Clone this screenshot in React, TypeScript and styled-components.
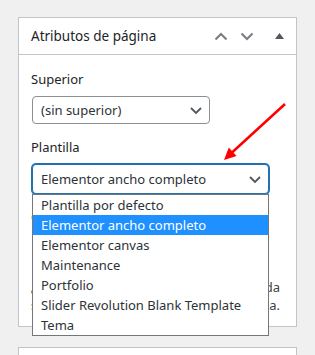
import { FC } from 'react'
import styled, { createGlobalStyle } from 'styled-components'

const GlobalStyle = createGlobalStyle`
  body {
    margin: 0;
    background: #f0f0f1;
    font-family: 'Noto Sans', 'Open Sans', sans-serif;
    color: #1d2327;
  }
`

const Page = styled.div`
  position: relative;
  padding: 17px 18px 0 18px;
  height: 355px;
  box-sizing: border-box;
  overflow: hidden;
`

const Postbox = styled.div`
  background: #ffffff;
  border: 1px solid #c3c4c7;
  margin-bottom: 20px;
`

const Header = styled.div`
  display: flex;
  align-items: center;
  justify-content: space-between;
  height: 36px;
  padding: 0 12px;
  border-bottom: 1px solid #c3c4c7;
`

const Title = styled.h2`
  margin: 0;
  font-size: 13.5px;
  font-weight: 400;
  color: #1d2327;
`

const HeaderActions = styled.div`
  display: flex;
  align-items: center;
  gap: 12px;
  margin-right: -2px;
`

const IconButton = styled.span<{ $gapLeft?: number }>`
  display: flex;
  align-items: center;
  justify-content: center;
  width: 14px;
  height: 20px;
  margin-left: ${(p) => p.$gapLeft ?? 0}px;
  color: #787c82;
`

const Body = styled.div`
  padding: 12px 12px 12px 12px;
`

const Label = styled.p<{ $top: number }>`
  margin: ${(p) => p.$top}px 0 8px 0;
  font-size: 13px;
  line-height: 18px;
  color: #1d2327;
`

const Field = styled.div`
  position: relative;
`

const Select = styled.div<{ $w: number; $focus?: boolean }>`
  box-sizing: border-box;
  display: flex;
  align-items: center;
  justify-content: space-between;
  width: ${(p) => p.$w}px;
  height: ${(p) => (p.$focus ? 30 : 28)}px;
  margin-left: 1px;
  padding: 0 6px 0 8px;
  border: 1px solid ${(p) => (p.$focus ? '#2271b1' : '#8c8f94')};
  box-shadow: ${(p) => (p.$focus ? '0 0 0 1px #2271b1' : 'none')};
  border-radius: 4px;
  font-size: 13px;
  color: #2c3338;
  background: #fff;
`

const List = styled.ul`
  position: absolute;
  top: 30px;
  left: 1px;
  width: 237px;
  box-sizing: border-box;
  margin: 0;
  padding: 0;
  list-style: none;
  background: #fff;
  border: 1px solid #767676;
  z-index: 2;
`

const Option = styled.li<{ $active?: boolean }>`
  height: 20px;
  line-height: 20px;
  padding-left: 8px;
  font-size: 13px;
  color: ${(p) => (p.$active ? '#ffffff' : '#2c3338')};
  background: ${(p) => (p.$active ? '#1e90ff' : 'transparent')};
  white-space: nowrap;
`

const NumberInput = styled.div`
  box-sizing: border-box;
  width: 80px;
  height: 30px;
  margin-left: 1px;
  border: 1px solid #8c8f94;
  border-radius: 4px;
`

const Help = styled.p`
  margin: 14px 0 0 0;
  width: 249px;
  font-size: 13px;
  line-height: 18px;
  color: #3c434a;
  text-align: justify;
  text-align-last: justify;
`

const HelpLine = styled.span`
  display: block;
`

const Arrow = styled.svg`
  position: absolute;
  left: 220px;
  top: 100px;
`

const NextPostbox = styled.div`
  background: #ffffff;
  border: 1px solid #c3c4c7;
  height: 40px;
`

const Chevron: FC<{ up?: boolean }> = ({ up }) => (
  <svg width="14" height="9" viewBox="0 0 14 9">
    <path
      d={up ? 'M1.5 7.5 L7 2 L12.5 7.5' : 'M1.5 1.5 L7 7 L12.5 1.5'}
      fill="none"
      stroke="currentColor"
      strokeWidth="2"
    />
  </svg>
)

const SelectArrow = () => (
  <svg width="14" height="9" viewBox="0 0 14 9">
    <path d="M2 2 L7 7 L12 2" fill="none" stroke="#50575e" strokeWidth="1.8" />
  </svg>
)

const templates = [
  'Plantilla por defecto',
  'Elementor ancho completo',
  'Elementor canvas',
  'Maintenance',
  'Portfolio',
  'Slider Revolution Blank Template',
  'Tema',
]

const App = () => {
  const selected = 'Elementor ancho completo'

  return (
    <Page>
      <GlobalStyle />
      <Postbox>
        <Header>
          <Title>Atributos de página</Title>
          <HeaderActions>
            <IconButton>
              <Chevron up />
            </IconButton>
            <IconButton>
              <Chevron />
            </IconButton>
            <IconButton $gapLeft={6}>
              <svg width="9" height="6" viewBox="0 0 9 6">
                <path d="M0 6 L4.5 0 L9 6 Z" fill="#50575e" />
              </svg>
            </IconButton>
          </HeaderActions>
        </Header>
        <Body>
          <Label $top={3}>Superior</Label>
          <Select $w={178}>
            <span>(sin superior)</span>
            <SelectArrow />
          </Select>
          <Label $top={14}>Plantilla</Label>
          <Field>
            <Select $w={237} $focus>
              <span>{selected}</span>
              <SelectArrow />
            </Select>
            <List>
              {templates.map((t) => (
                <Option key={t} $active={t === selected}>
                  {t}
                </Option>
              ))}
            </List>
          </Field>
          <Label $top={14}>Orden</Label>
          <NumberInput />
          <Help>
            <HelpLine>¿Necesitas ayuda? Usa la pestaña Ayuda</HelpLine>
            <HelpLine>sobre el título de tu pantalla.</HelpLine>
          </Help>
        </Body>
      </Postbox>
      <NextPostbox />
      <Arrow width="70" height="65" viewBox="220 100 70 65">
        <line x1="285" y1="104" x2="232" y2="152.5" stroke="#ff0000" strokeWidth="2.5" />
        <polygon points="224,160 236.5,156 228.8,147.6" fill="#ff0000" />
      </Arrow>
    </Page>
  )
}

export default App
